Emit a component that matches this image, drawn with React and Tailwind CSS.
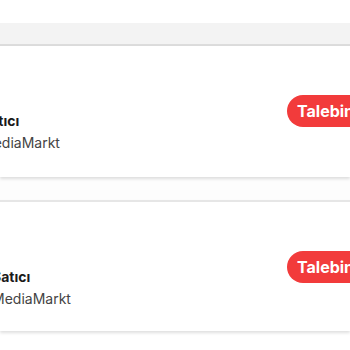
export default function App() {
  const cards = [
    { shift: '-ml-[19px]' },
    { shift: '-ml-[8px]' },
  ];

  return (
    <div className="w-[350px] h-[350px] overflow-hidden bg-white" style={{ fontFamily: 'Inter, "Noto Sans", sans-serif' }}>
      <div className="h-[23px] bg-white" />
      <div className="h-[23px] bg-[#f3f3f3] border-b-2 border-[#dcdcdc]" />

      <div className="flex flex-col gap-[23px] bg-[#fdfdfd]">
        {cards.map((c, i) => (
          <div
            key={i}
            className={`h-[131px] bg-white shadow-[0_2px_3px_rgba(0,0,0,0.13)] ${i === 1 ? 'border-t-2 border-[#e6e6e6]' : ''}`}
          >
            <div className="flex justify-between pt-[49px]">
              <div className={`${c.shift} pt-[15px] flex flex-col`}>
                <span className="text-[14px] leading-[22px] font-bold text-[#1a1a1a]">Satıcı</span>
                <span className="text-[14px] leading-[22px] text-[#444]">MediaMarkt</span>
              </div>
              <div className="shrink-0 w-[63px]">
                <button className="h-[32px] pl-[10px] pr-[14px] rounded-full bg-[#f23b3b] text-white text-[16px] font-bold whitespace-nowrap">
                  Talebini İncele
                </button>
              </div>
            </div>
          </div>
        ))}
      </div>
    </div>
  );
}
